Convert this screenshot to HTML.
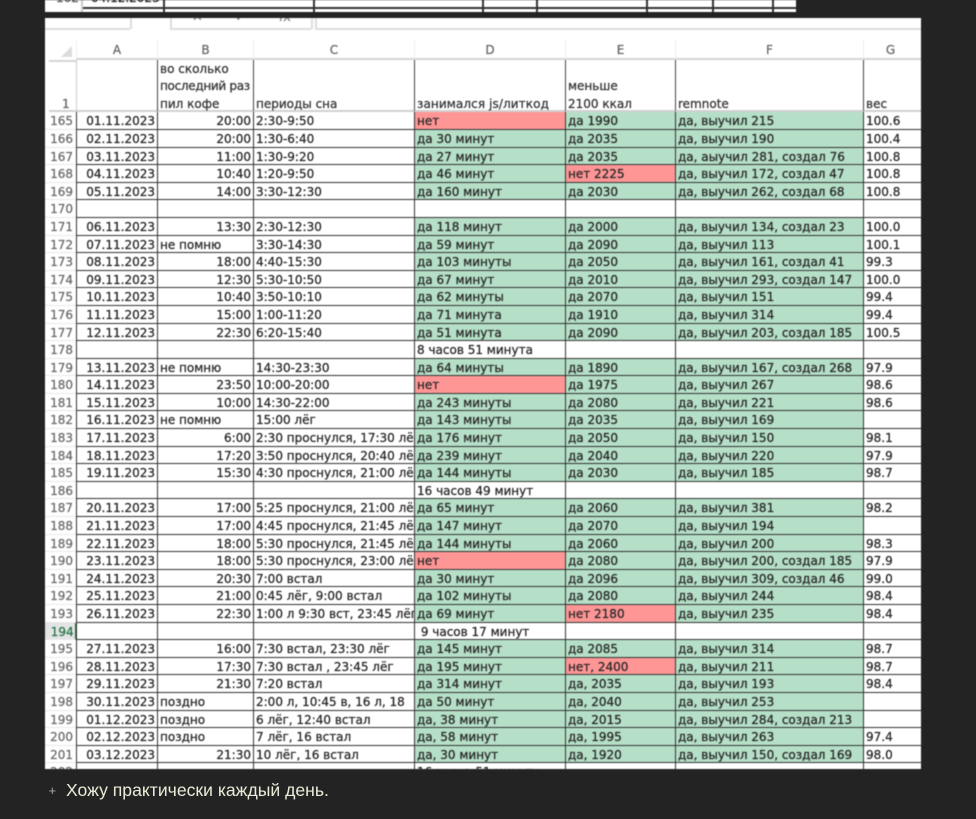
<!DOCTYPE html>
<html lang="ru">
<head>
<meta charset="utf-8">
<style>
html,body{margin:0;padding:0;background:#232323}
body{position:relative;width:976px;height:819px;overflow:hidden;font-family:"DejaVu Sans","Liberation Sans",sans-serif}
.strip{position:absolute;left:45px;top:0;width:751px;height:12px;background:#fff;overflow:hidden;filter:blur(.45px)}
.strip i{position:absolute;top:0;width:1.5px;height:12px;background:#333}
.strip .h{left:36px;top:7px;width:715px;height:1.5px}
.strip span{position:absolute;top:-10px;font-size:12px;line-height:17.6px;color:#222;-webkit-text-stroke:.25px #222}
.sheet{position:absolute;left:45px;top:18px;width:876px;height:751px;background:#fff;overflow:hidden;filter:blur(.45px);font-size:12px;color:#262626;-webkit-text-stroke:.25px currentColor}
.ln{position:absolute;background:#dcdcdc}
.tri{position:absolute;left:16px;top:28px;width:0;height:0;border-left:11px solid transparent;border-bottom:11px solid #dcdcdc}
.col{position:absolute;top:22px;height:20px;line-height:20px;text-align:center;color:#666;border-left:1px solid #eee;box-sizing:border-box;background:#fff;border-bottom:2px solid #d4d4d4}
.fx{position:absolute;top:-8px;color:#888;font-size:13px;line-height:16px}
.hdr{position:absolute;top:42px;left:0;height:52.4px;width:876px}
.hdr div{position:absolute;top:0;height:52.4px;box-sizing:border-box;border-left:1.6px solid #444;border-bottom:2px solid #d0d0d0;padding:0 0 0 2.5px}
.hdr p{position:absolute;left:2px;bottom:-3px;margin:0;line-height:17.6px;white-space:nowrap;color:#333}
.rows{position:absolute;left:0;top:94.4px;width:876px}
.r{display:flex;height:17.6px}
.r span{flex:none;box-sizing:border-box;height:17.6px;line-height:19.6px;border-left:1.6px solid #333;border-bottom:1.6px solid #333;padding-left:2px;overflow:hidden;white-space:pre;background:#fff}
.r span:nth-child(1){width:31px;border-left:0;border-bottom:1.4px solid #e8e8e8;text-align:right;padding:0 3px 0 0;color:#6a6a6a}
.r span:nth-child(2){width:81px;text-align:right;padding:0 2px 0 0}
.r span:nth-child(3){width:96px}
.r span:nth-child(4){width:161px}
.r span:nth-child(5){width:151px}
.r span:nth-child(6){width:110px}
.r span:nth-child(7){width:188px}
.r span:nth-child(8){width:58px}
.r .t{text-align:right;padding:0 2px 0 0}
.r .g{background:#b5dfc6}
.r .x{background:#ff9696}
.r span.sel:nth-child(1){background:#e4e4e4;color:#217346;border-right:1.6px solid #217346;padding-right:1.4px}
.li{position:absolute;left:66px;top:780px;font-family:"Liberation Sans",sans-serif;font-size:17.6px;line-height:20px;color:#ebebd8;white-space:nowrap}
.pl{position:absolute;left:48.5px;top:783px;font-family:"Liberation Sans",sans-serif;font-size:13px;line-height:16px;color:#a8a8a8}
</style>
</head>
<body>
<div class="strip">
<span style="left:11px;color:#777">162</span><span style="left:46px">04.12.2023</span>
<i class="h"></i>
<i style="left:36px;background:#ccc"></i><i style="left:118px"></i><i style="left:268px"></i><i style="left:437px"></i><i style="left:491px"></i><i style="left:601px"></i><i style="left:667px"></i><i style="left:727px"></i>
</div>
<div class="sheet">
<div class="ln" style="left:0;top:10px;width:85px;height:1.5px"></div>
<div class="ln" style="left:85px;top:0;width:1.5px;height:11px"></div>
<div class="ln" style="left:125px;top:0;width:1.5px;height:11px"></div>
<div class="ln" style="left:125px;top:10px;width:141px;height:1.5px"></div>
<div class="ln" style="left:266px;top:0;width:1.5px;height:11px"></div>
<div class="ln" style="left:270px;top:0;width:1.5px;height:11px"></div>
<div class="ln" style="left:270px;top:10px;width:606px;height:1.5px"></div>
<div class="fx" style="left:147px">✕</div><div class="fx" style="left:190px">✓</div><div class="fx" style="left:234px;font-style:italic">fx</div>
<div class="tri"></div>
<div class="ln" style="left:4px;top:42px;width:27px;height:2px;background:#d4d4d4"></div>
<div class="col" style="left:31px;width:81px">A</div>
<div class="col" style="left:112px;width:96px">B</div>
<div class="col" style="left:208px;width:161px">C</div>
<div class="col" style="left:369px;width:151px">D</div>
<div class="col" style="left:520px;width:110px">E</div>
<div class="col" style="left:630px;width:188px">F</div>
<div class="col" style="left:818px;width:58px;padding-right:4px">G</div>
<div class="hdr">
<div style="left:4px;width:27px;border-left:0"><p style="left:13px;color:#666">1</p></div>
<div style="left:31px;width:81px;border-left:1.5px solid #ccc"></div>
<div style="left:112px;width:96px"><p>во сколько<br><b style="font-weight:400;letter-spacing:-.3px">последний раз</b><br>пил кофе</p></div>
<div style="left:208px;width:161px"><p>периоды сна</p></div>
<div style="left:369px;width:151px"><p style="letter-spacing:.1px">занимался js/литкод</p></div>
<div style="left:520px;width:110px"><p>меньше<br>2100 ккал</p></div>
<div style="left:630px;width:188px"><p>remnote</p></div>
<div style="left:818px;width:58px"><p>вес</p></div>
</div>
<div class="rows">
<div class="r"><span>165</span><span>01.11.2023</span><span class="t">20:00</span><span>2:30-9:50</span><span class="x">нет</span><span class="g">да 1990</span><span class="g">да, выучил 215</span><span>100.6</span></div>
<div class="r"><span>166</span><span>02.11.2023</span><span class="t">20:00</span><span>1:30-6:40</span><span class="g">да 30 минут</span><span class="g">да 2035</span><span class="g">да, выучил 190</span><span>100.4</span></div>
<div class="r"><span>167</span><span>03.11.2023</span><span class="t">11:00</span><span>1:30-9:20</span><span class="g">да 27 минут</span><span class="g">да 2035</span><span class="g">да, аыучил 281, создал 76</span><span>100.8</span></div>
<div class="r"><span>168</span><span>04.11.2023</span><span class="t">10:40</span><span>1:20-9:50</span><span class="g">да 46 минут</span><span class="x">нет 2225</span><span class="g">да, выучил 172, создал 47</span><span>100.8</span></div>
<div class="r"><span>169</span><span>05.11.2023</span><span class="t">14:00</span><span>3:30-12:30</span><span class="g">да 160 минут</span><span class="g">да 2030</span><span class="g">да, выучил 262, создал 68</span><span>100.8</span></div>
<div class="r"><span>170</span><span></span><span></span><span></span><span></span><span></span><span></span><span></span></div>
<div class="r"><span>171</span><span>06.11.2023</span><span class="t">13:30</span><span>2:30-12:30</span><span class="g">да 118 минут</span><span class="g">да 2000</span><span class="g">да, выучил 134, создал 23</span><span>100.0</span></div>
<div class="r"><span>172</span><span>07.11.2023</span><span>не помню</span><span>3:30-14:30</span><span class="g">да 59 минут</span><span class="g">да 2090</span><span class="g">да, выучил 113</span><span>100.1</span></div>
<div class="r"><span>173</span><span>08.11.2023</span><span class="t">18:00</span><span>4:40-15:30</span><span class="g">да 103 минуты</span><span class="g">да 2050</span><span class="g">да, выучил 161, создал 41</span><span>99.3</span></div>
<div class="r"><span>174</span><span>09.11.2023</span><span class="t">12:30</span><span>5:30-10:50</span><span class="g">да 67 минут</span><span class="g">да 2010</span><span class="g">да, выучил 293, создал 147</span><span>100.0</span></div>
<div class="r"><span>175</span><span>10.11.2023</span><span class="t">10:40</span><span>3:50-10:10</span><span class="g">да 62 минуты</span><span class="g">да 2070</span><span class="g">да, выучил 151</span><span>99.4</span></div>
<div class="r"><span>176</span><span>11.11.2023</span><span class="t">15:00</span><span>1:00-11:20</span><span class="g">да 71 минута</span><span class="g">да 1910</span><span class="g">да, выучил 314</span><span>99.4</span></div>
<div class="r"><span>177</span><span>12.11.2023</span><span class="t">22:30</span><span>6:20-15:40</span><span class="g">да 51 минута</span><span class="g">да 2090</span><span class="g">да, выучил 203, создал 185</span><span>100.5</span></div>
<div class="r"><span>178</span><span></span><span></span><span></span><span>8 часов 51 минута</span><span></span><span></span><span></span></div>
<div class="r"><span>179</span><span>13.11.2023</span><span>не помню</span><span>14:30-23:30</span><span class="g">да 64 минуты</span><span class="g">да 1890</span><span class="g">да, выучил 167, создал 268</span><span>97.9</span></div>
<div class="r"><span>180</span><span>14.11.2023</span><span class="t">23:50</span><span>10:00-20:00</span><span class="x">нет</span><span class="g">да 1975</span><span class="g">да, выучил 267</span><span>98.6</span></div>
<div class="r"><span>181</span><span>15.11.2023</span><span class="t">10:00</span><span>14:30-22:00</span><span class="g">да 243 минуты</span><span class="g">да 2080</span><span class="g">да, выучил 221</span><span>98.6</span></div>
<div class="r"><span>182</span><span>16.11.2023</span><span>не помню</span><span>15:00 лёг</span><span class="g">да 143 минуты</span><span class="g">да 2035</span><span class="g">да, выучил 169</span><span></span></div>
<div class="r"><span>183</span><span>17.11.2023</span><span class="t">6:00</span><span>2:30 проснулся, 17:30 лёг</span><span class="g">да 176 минут</span><span class="g">да 2050</span><span class="g">да, выучил 150</span><span>98.1</span></div>
<div class="r"><span>184</span><span>18.11.2023</span><span class="t">17:20</span><span>3:50 проснулся, 20:40 лёг</span><span class="g">да 239 минут</span><span class="g">да 2040</span><span class="g">да, выучил 220</span><span>97.9</span></div>
<div class="r"><span>185</span><span>19.11.2023</span><span class="t">15:30</span><span>4:30 проснулся, 21:00 лёг</span><span class="g">да 144 минуты</span><span class="g">да 2030</span><span class="g">да, выучил 185</span><span>98.7</span></div>
<div class="r"><span>186</span><span></span><span></span><span></span><span>16 часов 49 минут</span><span></span><span></span><span></span></div>
<div class="r"><span>187</span><span>20.11.2023</span><span class="t">17:00</span><span>5:25 проснулся, 21:00 лёг</span><span class="g">да 65 минут</span><span class="g">да 2060</span><span class="g">да, выучил 381</span><span>98.2</span></div>
<div class="r"><span>188</span><span>21.11.2023</span><span class="t">17:00</span><span>4:45 проснулся, 21:45 лёг</span><span class="g">да 147 минут</span><span class="g">да 2070</span><span class="g">да, выучил 194</span><span></span></div>
<div class="r"><span>189</span><span>22.11.2023</span><span class="t">18:00</span><span>5:30 проснулся, 21:45 лёг</span><span class="g">да 144 минуты</span><span class="g">да 2060</span><span class="g">да, выучил 200</span><span>98.3</span></div>
<div class="r"><span>190</span><span>23.11.2023</span><span class="t">18:00</span><span>5:30 проснулся, 23:00 лёг</span><span class="x">нет</span><span class="g">да 2080</span><span class="g">да, выучил 200, создал 185</span><span>97.9</span></div>
<div class="r"><span>191</span><span>24.11.2023</span><span class="t">20:30</span><span>7:00 встал</span><span class="g">да 30 минут</span><span class="g">да 2096</span><span class="g">да, выучил 309, создал 46</span><span>99.0</span></div>
<div class="r"><span>192</span><span>25.11.2023</span><span class="t">21:00</span><span>0:45 лёг, 9:00 встал</span><span class="g">да 102 минуты</span><span class="g">да 2080</span><span class="g">да, выучил 244</span><span>98.4</span></div>
<div class="r"><span>193</span><span>26.11.2023</span><span class="t">22:30</span><span>1:00 л 9:30 вст, 23:45 лёг</span><span class="g">да 69 минут</span><span class="x">нет 2180</span><span class="g">да, выучил 235</span><span>98.4</span></div>
<div class="r"><span class="sel">194</span><span></span><span></span><span></span><span> 9 часов 17 минут</span><span></span><span></span><span></span></div>
<div class="r"><span>195</span><span>27.11.2023</span><span class="t">16:00</span><span>7:30 встал, 23:30 лёг</span><span class="g">да 145 минут</span><span class="g">да 2085</span><span class="g">да, выучил 314</span><span>98.7</span></div>
<div class="r"><span>196</span><span>28.11.2023</span><span class="t">17:30</span><span>7:30 встал , 23:45 лёг</span><span class="g">да 195 минут</span><span class="x">нет, 2400</span><span class="g">да, выучил 211</span><span>98.7</span></div>
<div class="r"><span>197</span><span>29.11.2023</span><span class="t">21:30</span><span>7:20 встал</span><span class="g">да 314 минут</span><span class="g">да, 2035</span><span class="g">да, выучил 193</span><span>98.4</span></div>
<div class="r"><span>198</span><span>30.11.2023</span><span>поздно</span><span>2:00 л, 10:45 в, 16 л, 18</span><span class="g">да 50 минут</span><span class="g">да, 2040</span><span class="g">да, выучил 253</span><span></span></div>
<div class="r"><span>199</span><span>01.12.2023</span><span>поздно</span><span>6 лёг, 12:40 встал</span><span class="g">да, 38 минут</span><span class="g">да, 2015</span><span class="g">да, выучил 284, создал 213</span><span></span></div>
<div class="r"><span>200</span><span>02.12.2023</span><span>поздно</span><span>7 лёг, 16 встал</span><span class="g">да, 58 минут</span><span class="g">да, 1995</span><span class="g">да, выучил 263</span><span>97.4</span></div>
<div class="r"><span>201</span><span>03.12.2023</span><span class="t">21:30</span><span>10 лёг, 16 встал</span><span class="g">да, 30 минут</span><span class="g">да, 1920</span><span class="g">да, выучил 150, создал 169</span><span>98.0</span></div>
<div class="r"><span>202</span><span></span><span></span><span></span><span>16 часов 51 минута</span><span></span><span></span><span></span></div>
</div>
</div>
<div class="pl">+</div>
<div class="li">Хожу практически каждый день.</div>
</body>
</html>
